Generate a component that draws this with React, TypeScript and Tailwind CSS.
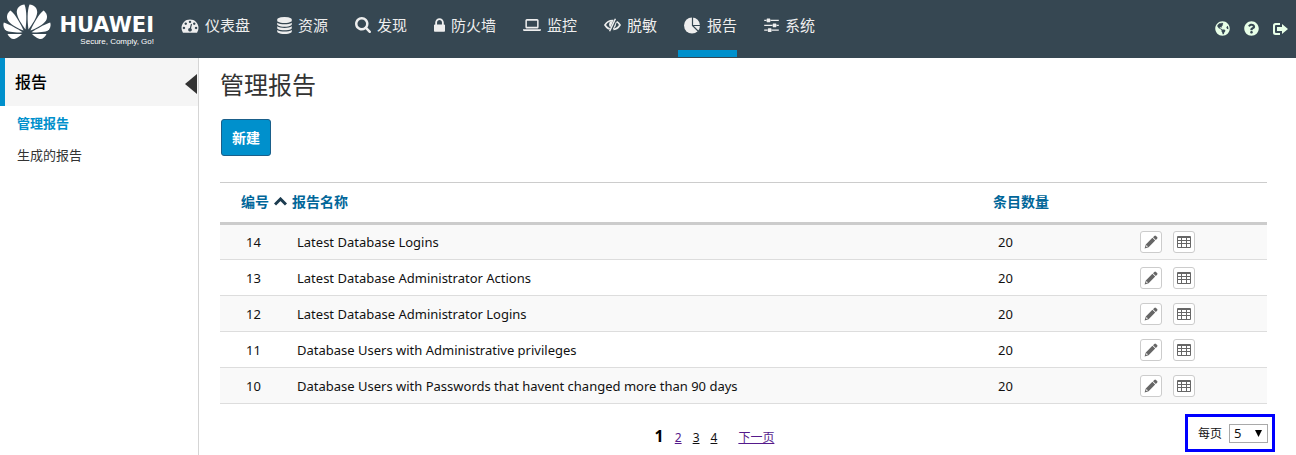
import React from 'react';
import { FaQuestionCircle, FaGlobeAmericas } from 'react-icons/fa';

function Icon({ d, box, className }: { d: string; box: string; className: string }) {
  return (
    <svg viewBox={box} className={`shrink-0 ${className}`} fill="currentColor" fillRule="evenodd" aria-hidden="true">
      <path d={d} />
    </svg>
  );
}

function MaskedEye() {
  return (
    <svg viewBox="0 0 17 14" className="h-[14px] w-[17px] shrink-0" fill="none" stroke="currentColor" aria-hidden="true">
      <path d="M1 7C2.800 4 5.500 2.500 8.500 2.500S14.200 4 16 7c-1.800 3-4.500 4.500-7.500 4.500S2.800 10 1 7z" strokeWidth="1.700" />
      <circle cx="8.500" cy="6.500" r="3.400" fill="currentColor" stroke="none" />
      <path d="M12.300.3 6.500 13.700" stroke="#364752" strokeWidth="3.600" />
      <path d="M11.400.8 5.600 13.300" strokeWidth="1.500" />
      <path d="M12.500 3.800 9.300 11.200" strokeWidth="1" />
    </svg>
  );
}

function Pie() {
  return (
    <svg viewBox="0 0 17 17" className="h-[17px] w-[17px] shrink-0" fill="currentColor" aria-hidden="true">
      <circle cx="8" cy="8.500" r="8" />
      <path d="M8.500 0v8.500H17M8.500 8.500l6 6" fill="none" stroke="#364752" strokeWidth="1.200" />
    </svg>
  );
}

const nav = [
  {
    label: '仪表盘',
    icon: (
      <Icon
        box="0 0 1792 1792"
        className="h-[17px] w-[18px]"
        d="M384 1152q0-53-37.5-90.5t-90.5-37.5-90.5 37.5-37.5 90.5 37.5 90.5 90.5 37.5 90.5-37.5 37.5-90.5zm192-448q0-53-37.5-90.5t-90.5-37.5-90.5 37.5-37.5 90.5 37.5 90.5 90.5 37.5 90.5-37.5 37.5-90.5zm428 481l101-382q6-26-7.5-48.5t-38.5-29.5-48 6.5-30 39.5l-101 382q-60 5-107 43.5t-63 98.5q-20 77 20 146t117 89 146-20 89-117q16-60-6-117t-72-91zm660-33q0-53-37.5-90.5t-90.5-37.5-90.5 37.5-37.5 90.5 37.5 90.5 90.5 37.5 90.5-37.5 37.5-90.5zm-640-640q0-53-37.5-90.5t-90.5-37.5-90.5 37.5-37.5 90.5 37.5 90.5 90.5 37.5 90.5-37.5 37.5-90.5zm448 192q0-53-37.5-90.5t-90.5-37.5-90.5 37.5-37.5 90.5 37.5 90.5 90.5 37.5 90.5-37.5 37.5-90.5zm320 448q0 261-141 483-19 29-54 29h-1402q-35 0-54-29-141-221-141-483 0-182 71-348t191-286 286-191 348-71 348 71 286 191 191 286 71 348z"
      />
    ),
  },
  {
    label: '资源',
    icon: (
      <Icon
        box="128 0 1536 1792"
        className="h-[17px] w-[15px]"
        d="M896 768q237 0 443-43t325-127v170q0 69-103 128t-280 93.5-385 34.5-385-34.5-280-93.5-103-128v-170q119 84 325 127t443 43zm0 768q237 0 443-43t325-127v170q0 69-103 128t-280 93.5-385 34.5-385-34.5-280-93.5-103-128v-170q119 84 325 127t443 43zm0-384q237 0 443-43t325-127v170q0 69-103 128t-280 93.5-385 34.5-385-34.5-280-93.5-103-128v-170q119 84 325 127t443 43zm0-1152q208 0 385 34.5t280 93.5 103 128v128q0 69-103 128t-280 93.5-385 34.5-385-34.5-280-93.5-103-128v-128q0-69 103-128t280-93.5 385-34.5z"
      />
    ),
  },
  {
    label: '发现',
    icon: (
      <Icon
        box="64 128 1664 1664"
        className="h-[16px] w-[16px]"
        d="M1216 832q0-185-131.5-316.5t-316.5-131.5-316.5 131.5-131.5 316.5 131.5 316.5 316.5 131.5 316.5-131.5 131.5-316.5zm512 832q0 52-38 90t-90 38q-54 0-90-38l-343-342q-179 124-399 124-143 0-273.5-55.5t-225-150-150-225-55.5-273.5 55.5-273.5 150-225 225-150 273.5-55.5 273.5 55.5 225 150 150 225 55.5 273.5q0 220-124 399l343 343q37 37 37 90z"
      />
    ),
  },
  {
    label: '防火墙',
    icon: (
      <Icon
        box="320 128 1152 1408"
        className="h-[14px] w-[11px]"
        d="M640 768h512v-192q0-106-75-181t-181-75-181 75-75 181v192zm832 96v576q0 40-28 68t-68 28h-960q-40 0-68-28t-28-68v-576q0-40 28-68t68-28h32v-192q0-184 132-316t316-132 316 132 132 316v192h32q40 0 68 28t28 68z"
      />
    ),
  },
  {
    label: '监控',
    icon: (
      <Icon
        box="0 256 1920 1280"
        className="h-[12px] w-[18px]"
        d="M416 1280q-66 0-113-47t-47-113v-704q0-66 47-113t113-47h1088q66 0 113 47t47 113v704q0 66-47 113t-113 47h-1088zm0-832v640h1088v-640zm1344 896h160v96q0 40-47 68t-113 28h-1600q-66 0-113-28t-47-68v-96h1760z"
      />
    ),
  },
  { label: '脱敏', icon: <MaskedEye /> },
  { label: '报告', active: true, icon: <Pie /> },
  {
    label: '系统',
    icon: (
      <Icon
        box="0 192 1536 1472"
        className="h-[14px] w-[15px]"
        d="M352 1408v128h-352v-128h352zm352-128q26 0 45 19t19 45v256q0 26-19 45t-45 19h-256q-26 0-45-19t-19-45v-256q0-26 19-45t45-19h256zm160-384v128h-864v-128h864zm-640-512v128h-224v-128h224zm1312 1024v128h-736v-128h736zm-960-1152q26 0 45 19t19 45v256q0 26-19 45t-45 19h-256q-26 0-45-19t-19-45v-256q0-26 19-45t45-19h256zm640 512q26 0 45 19t19 45v256q0 26-19 45t-45 19h-256q-26 0-45-19t-19-45v-256q0-26 19-45t45-19h256zm320 128v128h-224v-128h224zm0-512v128h-864v-128h864z"
      />
    ),
  },
];

const reports = [
  { id: 14, name: 'Latest Database Logins', count: 20 },
  { id: 13, name: 'Latest Database Administrator Actions', count: 20 },
  { id: 12, name: 'Latest Database Administrator Logins', count: 20 },
  { id: 11, name: 'Database Users with Administrative privileges', count: 20 },
  { id: 10, name: 'Database Users with Passwords that havent changed more than 90 days', count: 20 },
];

function Petals() {
  return (
    <svg viewBox="0 0 48 37" className="h-[37px] w-[48px]" fill="#fff" aria-hidden="true">
      <path d="M22.500 25.500C23.600 17 24 7 21.500 0.500 17 1 13.500 4 13.800 8.500 14.200 14 19 20.500 22.500 25.500z" />
      <path d="M20.500 26.500C17.500 19.500 12.500 10.500 7.500 6.500 4 9 3 13 5 16.500 7.500 20.500 15 24.500 20.500 26.500z" />
      <path d="M19.500 28.200C13.500 24.500 6 20 .8 18.500-.5 22.500 1.500 26.500 5.500 27.600 9 28.500 15 28.500 19.500 28.200z" />
      <path d="M19 30H4.500C6 33.500 9 35.700 12 34.800 14.500 34 17 31.800 19 30z" />
      <path d="M25.500 25.500C24.400 17 24 7 26.500 .5 31 1 34.500 4 34.200 8.500 33.800 14 29 20.500 25.500 25.500z" />
      <path d="M27.500 26.500C30.500 19.500 35.500 10.500 40.500 6.500 44 9 45 13 43 16.500 40.500 20.500 33 24.500 27.500 26.500z" />
      <path d="M28.500 28.200C34.500 24.500 42 20 47.200 18.500 48.500 22.500 46.500 26.500 42.500 27.600 39 28.500 33 28.500 28.500 28.200z" />
      <path d="M29 30H43.500C42 33.500 39 35.700 36 34.800 33.500 34 31 31.800 29 30z" />
    </svg>
  );
}

function Logo() {
  return (
    <a href="#home" className="flex w-[175px] shrink-0 items-start pl-[3px] pt-[4px] text-white">
      <Petals />
      <span className="flex w-[103px] flex-col items-end pt-[9px]">
        <span className="font-['DejaVu_Sans',sans-serif] text-[21px] font-bold leading-[24px]">HUAWEI</span>
        <span className="whitespace-nowrap font-['Liberation_Sans',sans-serif] text-[8px] leading-[10px]">Secure, Comply, Go!</span>
      </span>
    </a>
  );
}

function PencilIcon() {
  return (
    <svg viewBox="0 0 14 14" className="size-[14px]" fill="#666" fillRule="evenodd" aria-hidden="true">
      <path d="M10.300.9a1.200 1.200 0 0 1 1.700 0l1.100 1.100a1.200 1.200 0 0 1 0 1.700l-1.300 1.300L9 2.200zM8.400 2.800l2.800 2.800-6.600 6.600L.6 13.400l1.200-4zM2.600 10.100l-.6 1.900 1.900-.6z" />
    </svg>
  );
}

function TableIcon() {
  return (
    <svg viewBox="0 0 14 12" className="h-[12px] w-[14px]" fill="#666" fillRule="evenodd" aria-hidden="true">
      <path d="M1 0h12a1 1 0 0 1 1 1v10a1 1 0 0 1-1 1H1a1 1 0 0 1-1-1V1a1 1 0 0 1 1-1zM1 2v2h3V2zM5 2v2h4V2zM10 2v2h3V2zM1 5v2h3V5zM5 5v2h4V5zM10 5v2h3V5zM1 8v3h3V8zM5 8v3h4V8zM10 8v3h3V8z" />
    </svg>
  );
}

const actionButton = 'flex size-[22px] items-center justify-center rounded-[3px] border border-[#ccc] bg-white';
const headCell = 'p-0 pb-[2px] text-left text-[14px] font-bold text-[#006699]';

export default function App() {
  return (
    <div className="flex min-h-screen flex-col bg-white font-['Noto_Sans','Noto_Sans_CJK_SC',sans-serif] text-[13px] text-[#111]">
      <header className="flex h-[58px] bg-[#364752] pb-px text-[#eee]">
        <Logo />
        <nav className="flex gap-[21px]">
          {nav.map((item) => (
            <a
              key={item.label}
              href="#nav"
              className={`flex items-start whitespace-nowrap border-b-[7px] pl-[6px] pt-[15px] text-[15px] leading-[20px] ${item.active ? 'border-[#0090cc]' : 'border-transparent'}`}
            >
              <span className="flex h-[20px] items-center gap-[6px]">
                {item.icon}
                {item.label}
              </span>
            </a>
          ))}
        </nav>
        <div className="ml-auto flex items-center gap-[14px] pr-[8px] text-[#e8ffe8]">
          <button type="button" aria-label="语言"><FaGlobeAmericas className="size-[15px]" /></button>
          <button type="button" aria-label="帮助"><FaQuestionCircle className="size-[15px]" /></button>
          <button type="button" aria-label="退出">
            <svg viewBox="0 0 15 12" className="h-[12px] w-[15px]" fill="currentColor" aria-hidden="true">
              <path d="M7 0H2.500A2.500 2.500 0 0 0 0 2.500v7A2.500 2.500 0 0 0 2.500 12H7v-2H3a1 1 0 0 1-1-1V3a1 1 0 0 1 1-1h4zM9 1v3H4v4h5v3l6-5z" />
            </svg>
          </button>
        </div>
      </header>

      <div className="flex flex-1">
        <aside className="w-[199px] shrink-0 border-r border-[#d5d5d5]">
          <div className="flex h-[48px] items-center justify-between border-l-[5px] border-[#0090cc] bg-[#f5f5f5] pl-[10px]">
            <h2 className="text-[16px] font-medium leading-[20px] text-black">报告</h2>
            <button type="button" aria-label="收起" className="pr-px">
              <svg viewBox="0 0 12 20" className="mt-[4px] h-[20px] w-[12px]" fill="#333" aria-hidden="true">
                <path d="M12 0v20L0 10z" />
              </svg>
            </button>
          </div>
          <ul className="flex flex-col gap-[12px] pl-[17px] pt-[7px] leading-[20px]">
            <li><a href="#manage" className="font-bold text-[#0090cc]">管理报告</a></li>
            <li><a href="#generated" className="text-[#333]">生成的报告</a></li>
          </ul>
        </aside>

        <main className="min-w-0 flex-1 px-[21px]">
          <h1 className="pt-[9px] text-[24px] leading-[36px] text-[#333]">管理报告</h1>
          <button type="button" className="ml-px mt-[16px] block h-[37px] w-[50px] rounded-[3px] border border-[#1a5f8a] bg-[#0090cc] text-[14px] font-bold text-white">
            新建
          </button>

          <div className="pr-2">
            <table className="mt-[26px] w-full table-fixed border-collapse">
              <colgroup>
                <col className="w-[72px]" />
                <col />
                <col className="w-[147px]" />
                <col className="w-[127px]" />
              </colgroup>
              <thead>
                <tr className="h-[41px] border-b-[3px] border-t border-b-[#ccc] border-t-[#ccc]">
                  <th scope="col" className={`${headCell} pl-[21px]`}>
                    <span className="flex items-center gap-[5px] whitespace-nowrap">
                      编号
                      <svg viewBox="0 0 13 9" className="h-[9px] w-[13px] shrink-0" fill="none" stroke="#1c3c50" strokeWidth="3" aria-hidden="true">
                        <path d="M1 7.500 6.500 2 12 7.500" />
                      </svg>
                    </span>
                  </th>
                  <th scope="col" className={headCell}>报告名称</th>
                  <th scope="col" className={headCell}>条目数量</th>
                  <th scope="col" aria-label="操作" className="p-0" />
                </tr>
              </thead>
              <tbody>
                {reports.map((r) => (
                  <tr key={r.id} className="h-[36px] border-b border-[#ddd] odd:bg-[#f9f9f9]">
                    <td className="p-0 pl-[26px] pt-[2px]">{r.id}</td>
                    <td className="p-0 pl-[5px] pt-[2px]">{r.name}</td>
                    <td className="p-0 pl-[5px] pt-[2px]">{r.count}</td>
                    <td className="p-0">
                      <div className="flex gap-[11px]">
                        <button type="button" aria-label="编辑" className={actionButton}><PencilIcon /></button>
                        <button type="button" aria-label="查看" className={actionButton}><TableIcon /></button>
                      </div>
                    </td>
                  </tr>
                ))}
              </tbody>
            </table>
          </div>

          <div className="flex items-start pt-[10px] text-[12px]">
            <nav aria-label="分页" className="flex flex-1 items-baseline justify-center gap-[11px] whitespace-nowrap pl-[24px] pt-[12px] leading-[20px]">
              <span className="text-[16px] font-bold text-black">1</span>
              <a href="#p2" className="text-[#551a8b] underline">2</a>
              <a href="#p3" className="underline">3</a>
              <a href="#p4" className="underline">4</a>
              <a href="#next" className="ml-[10px] text-[#551a8b] underline">下一页</a>
            </nav>
            <div className="flex h-[38px] w-[90px] shrink-0 items-center gap-[7px] border-[3px] border-[#0000ff] pl-[10px]">
              <label htmlFor="per-page" className="whitespace-nowrap pt-[2px]">每页</label>
              <span className="relative flex">
                <select id="per-page" defaultValue="5" className="h-[19px] w-[39px] appearance-none border border-[#a9a9a9] bg-white pl-[4px] text-[13px] leading-[17px]">
                  <option>5</option>
                  <option>10</option>
                  <option>20</option>
                </select>
                <svg viewBox="0 0 7 7" className="pointer-events-none absolute right-[6px] top-[6px] size-[7px]" fill="#000" aria-hidden="true">
                  <path d="M0 0h7L3.500 7z" />
                </svg>
              </span>
            </div>
          </div>
        </main>
      </div>
    </div>
  );
}
